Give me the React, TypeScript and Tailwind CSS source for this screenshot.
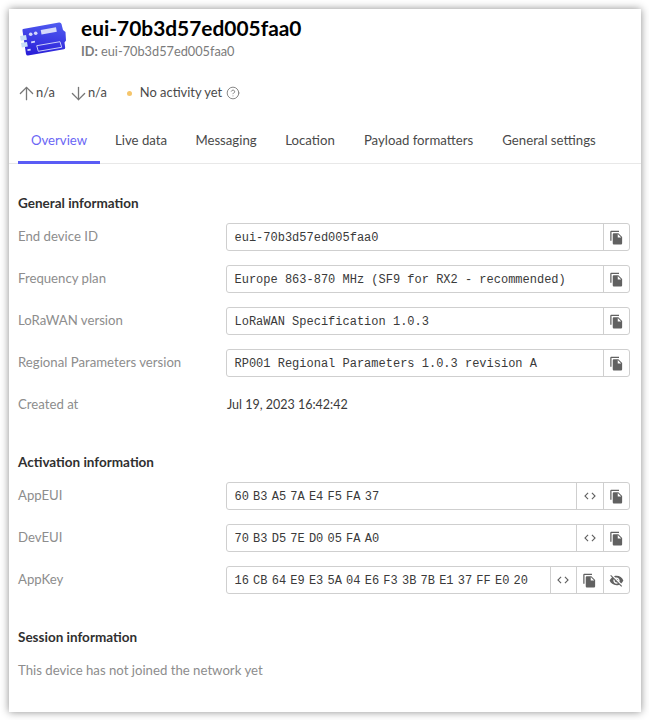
import { ArrowDown, ArrowUp, CircleHelp } from 'lucide-react';
import { MdCode, MdFileCopy, MdVisibilityOff } from 'react-icons/md';

function DeviceLogo() {
  return (
    <svg width="46" height="34" viewBox="0 0 46 34" className="mt-[6px] shrink-0">
      <defs>
        <linearGradient id="dev" x1="0.6" y1="0" x2="0.4" y2="1">
          <stop offset="0" stopColor="#4f5af0" />
          <stop offset="1" stopColor="#2a1fd8" />
        </linearGradient>
      </defs>
      <path d="M3 7 39 .6q2-.3 2.500 1.500L43 8l2.500 2 .5 8.500-1.500 2 .7 5q.2 1.500-1.300 1.800L8 33.400q-1.500.2-2-1.500L2.500 8.800Q2.300 7.200 3 7z" fill="url(#dev)" />
      <path d="M20.700 8 36 5.300l.8 4.400-15.300 2.700z" fill="#d6d9fb" />
      <circle cx="10.700" cy="12.300" r="1.800" fill="#d6d9fb" />
      <circle cx="15.700" cy="11.300" r="1.800" fill="#d6d9fb" />
      <path d="M0 14 6 13l.9 4.800-6 1zM1 21 7 20l.8 4.400-6 1z" fill="#c9e0f5" />
      <path d="M11 19.500l3.800-.7.300 1.700-3.800.7zM7.300 27.300l3.200-.6.300 1.700-3.200.6z" fill="#d6d9fb" />
      <path d="M16.700 23.700 40 19.700l1.700 5.600-23.400 4z" fill="none" stroke="#c9cdf9" strokeWidth="1" />
    </svg>
  );
}

function IconButton({ children }: { children: React.ReactNode }) {
  return <div className="w-[26.5px] shrink-0 flex items-center justify-center border-l border-[#cfcfcf] text-[#616161]">{children}</div>;
}

function Row({ label, value, code, eye, bytes }: { label: string; value: string; code?: boolean; eye?: boolean; bytes?: boolean }) {
  return (
    <div className="flex items-center h-[28px] mb-[14px]">
      <div className="w-[208px] shrink-0 text-[#8d8d8d] text-[13.2px]">{label}</div>
      <div className="flex-1 min-w-0 h-[28px] flex border border-[#cfcfcf] rounded-[3px] bg-white">
        <div className={bytes ? "flex-1 min-w-0 px-[7.5px] pt-px flex items-center font-['Liberation_Mono',monospace] text-[12px] text-[#3a3a3a] whitespace-pre [word-spacing:-3px]" : "flex-1 min-w-0 px-[7.5px] pt-px flex items-center font-['Liberation_Mono',monospace] text-[12px] text-[#3a3a3a] whitespace-pre"}>{value}</div>
        {code && <IconButton><MdCode size={14} /></IconButton>}
        <IconButton><MdFileCopy size={15} /></IconButton>
        {eye && <IconButton><MdVisibilityOff size={15} /></IconButton>}
      </div>
    </div>
  );
}

function SectionTitle({ children }: { children: React.ReactNode }) {
  return <h3 className="text-[13.5px] font-bold text-[#303030] leading-[20px]">{children}</h3>;
}

export default function App() {
  const tabs = ['Live data', 'Messaging', 'Location', 'Payload formatters', 'General settings'];
  return (
    <div className="w-[649px] h-[720px] bg-white p-[9px] font-['Lato','Noto_Sans',sans-serif]">
      <div className="w-[632px] h-[703px] bg-white shadow-[0_0_8px_rgba(0,0,0,0.45)]">
        <div className="flex pl-[11px] pt-[7px] h-[58px]">
          <DeviceLogo />
          <div className="ml-[15px]">
            <h1 className="text-[20.9px] leading-[24px] font-bold text-black">eui-70b3d57ed005faa0</h1>
            <div className="text-[12.75px] leading-[18px] mt-[2px] text-[#7b7b7b]"><span className="font-bold">ID:</span> eui-70b3d57ed005faa0</div>
          </div>
        </div>
        <div className="flex items-center h-[20px] mt-[16px] pl-[7px] text-[12.9px] text-[#4a4a4a]">
          <ArrowUp size={21} strokeWidth={1.5} className="text-[#777]" />
          <span className="-ml-px">n/a</span>
          <ArrowDown size={21} strokeWidth={1.5} className="text-[#777] ml-[13px]" />
          <span className="-ml-px">n/a</span>
          <span className="ml-[20px] w-[5px] h-[5px] rounded-full bg-[#f5c56b]" />
          <span className="ml-[8px]">No activity yet</span>
          <CircleHelp size={14} strokeWidth={1.5} className="ml-[4px] text-[#777]" />
        </div>
        <div className="grid grid-cols-[83px_80px_90px_78px_139px_122px] mt-[18px] h-[43px] pl-[9px] border-b border-[#e8e8e8] text-[13.2px] text-[#4a4a4a]">
          <div className="h-[43px] mr-px flex items-center justify-center text-[#6a66f5] border-b-[3px] border-[#5a5cf5]">Overview</div>
          {tabs.map(tab => (
            <div key={tab} className="h-[40px] flex items-center justify-center whitespace-nowrap">{tab}</div>
          ))}
        </div>
        <div className="px-[9px] pr-[11px] pt-[29px]">
          <SectionTitle>General information</SectionTitle>
          <div className="mt-[10px]">
            <Row label="End device ID" value="eui-70b3d57ed005faa0" />
            <Row label="Frequency plan" value="Europe 863-870 MHz (SF9 for RX2 - recommended)" />
            <Row label="LoRaWAN version" value="LoRaWAN Specification 1.0.3" />
            <Row label="Regional Parameters version" value="RP001 Regional Parameters 1.0.3 revision A" />
            <div className="flex items-center h-[28px]">
              <div className="w-[208px] text-[#8d8d8d] text-[13.2px]">Created at</div>
              <div className="text-[#3a3a3a] text-[12.5px] ml-px">Jul 19, 2023 16:42:42</div>
            </div>
          </div>
          <div className="mt-[33px]"><SectionTitle>Activation information</SectionTitle></div>
          <div className="mt-[10px]">
            <Row label="AppEUI" value="60 B3 A5 7A E4 F5 FA 37" code bytes />
            <Row label="DevEUI" value="70 B3 D5 7E D0 05 FA A0" code bytes />
            <Row label="AppKey" value="16 CB 64 E9 E3 5A 04 E6 F3 3B 7B E1 37 FF E0 20" code eye bytes />
          </div>
          <div className="mt-[33px]"><SectionTitle>Session information</SectionTitle></div>
          <p className="mt-[13px] text-[13.2px] leading-[20px] text-[#8d8d8d]">This device has not joined the network yet</p>
        </div>
      </div>
    </div>
  );
}
